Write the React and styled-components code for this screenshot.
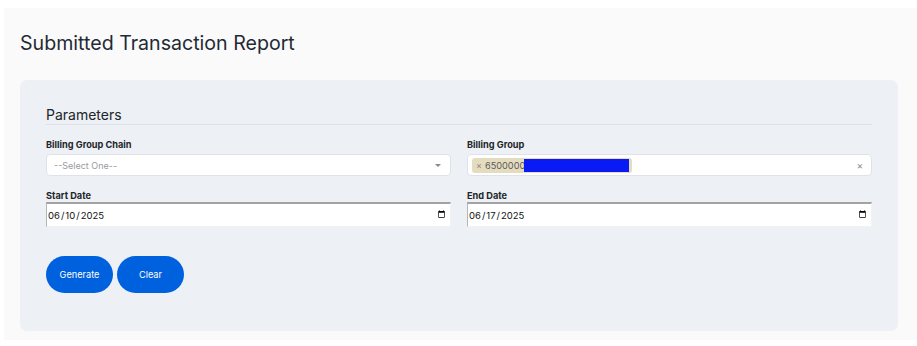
import React from "react";
import styled, { createGlobalStyle } from "styled-components";

const Global = createGlobalStyle`
  html, body { margin: 0; padding: 0; background: #ffffff; }
  body { font-family: Inter, "Noto Sans", Arial, sans-serif; color: #212529; }
  * { box-sizing: border-box; }
`;

const Page = styled.div`
  margin: 8px 0 0 4px;
  background: #fafafa;
  padding: 23px 19px 9px 16px;
`;

const Title = styled.h1`
  margin: 0 0 25px 0;
  font-size: 19.6px;
  line-height: 24px;
  font-weight: 400;
  color: #1f2a35;
`;

const Panel = styled.section`
  background: #edf0f5;
  border-radius: 7px;
  padding: 26px 26px 38px 26px;
`;

const Legend = styled.h2`
  margin: 0;
  font-size: 14px;
  line-height: 18px;
  font-weight: 400;
  color: #212529;
  border-bottom: 1px solid #dde1e6;
`;

const Grid = styled.div`
  display: grid;
  grid-template-columns: 1fr 1fr;
  column-gap: 16px;
  row-gap: 14px;
  margin-top: 14px;
`;

const Field = styled.div`
  display: flex;
  flex-direction: column;
`;

const Label = styled.label`
  font-size: 9.2px;
  line-height: 12px;
  font-weight: 700;
  color: #212529;
  margin-bottom: ${(p) => (p.$tight ? "0" : "3px")};
`;

const SelectBox = styled.div`
  height: 22px;
  background: #ffffff;
  border: 1px solid #dfe3e8;
  border-radius: 4px;
  display: flex;
  align-items: center;
  justify-content: space-between;
  padding: 0 9px 0 ${(p) => (p.$multi ? "4px" : "7px")};
`;

const Placeholder = styled.span`
  font-size: 9px;
  color: #9a9a9a;
`;

const Caret = styled.span`
  width: 0;
  height: 0;
  border-left: 3px solid transparent;
  border-right: 3px solid transparent;
  border-top: 3px solid #8a8a8a;
`;

const Tag = styled.span`
  position: relative;
  display: inline-flex;
  align-items: center;
  height: 15px;
  width: 160px;
  background: #e5dcbf;
  border-radius: 3px;
  padding: 0 4px;
  font-size: 9.2px;
  color: #5a5a5a;
`;

const TagX = styled.span`
  color: #888;
  margin-right: 3px;
  font-size: 9px;
`;

const Redaction = styled.span`
  position: absolute;
  left: 52px;
  top: 1px;
  width: 105px;
  height: 13px;
  background: #0a1af5;
`;

const ClearX = styled.span`
  font-size: 10px;
  color: #8a8a8a;
  margin-right: -1px;
`;

const DateInput = styled.input`
  width: 100%;
  height: 25px;
  margin: 0;
  padding: 0 2px 0 0;
  background: #ffffff;
  border-style: solid;
  border-width: 2px 1px 1px 1px;
  border-color: #a3a3a3 #f2f2f2 #f2f2f2 #b5b5b5;
  font-family: Inter, "Noto Sans", Arial, sans-serif;
  font-size: 9.5px;
  color: #111;
  outline: none;
`;

const Actions = styled.div`
  display: flex;
  gap: 4px;
  margin-top: 29px;
`;

const Button = styled.button`
  width: 67px;
  height: 37px;
  border: none;
  border-radius: 19px;
  background: #0061df;
  color: #ffffff;
  font-family: Inter, "Noto Sans", Arial, sans-serif;
  font-size: 9.2px;
  cursor: pointer;
`;

export default function App() {
  return (
    <>
      <Global />
      <Page>
        <Title>Submitted Transaction Report</Title>
        <Panel>
          <Legend>Parameters</Legend>
          <Grid>
            <Field>
              <Label>Billing Group Chain</Label>
              <SelectBox>
                <Placeholder>--Select One--</Placeholder>
                <Caret />
              </SelectBox>
            </Field>
            <Field>
              <Label>Billing Group</Label>
              <SelectBox $multi>
                <Tag>
                  <TagX>×</TagX>6500000
                  <Redaction />
                </Tag>
                <ClearX>×</ClearX>
              </SelectBox>
            </Field>
            <Field>
              <Label $tight>Start Date</Label>
              <DateInput type="date" defaultValue="2025-06-10" />
            </Field>
            <Field>
              <Label $tight>End Date</Label>
              <DateInput type="date" defaultValue="2025-06-17" />
            </Field>
          </Grid>
          <Actions>
            <Button>Generate</Button>
            <Button>Clear</Button>
          </Actions>
        </Panel>
      </Page>
    </>
  );
}
